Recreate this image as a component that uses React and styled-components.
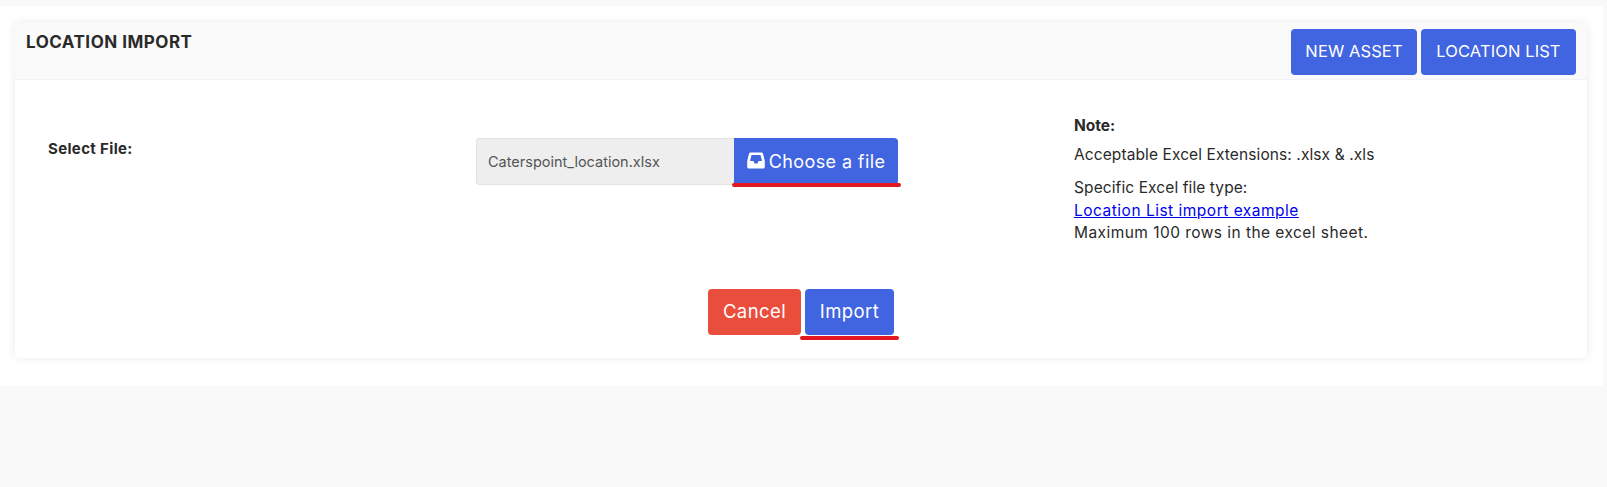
import React from "react";
import styled, { createGlobalStyle } from "styled-components";

const GlobalStyle = createGlobalStyle`
  html, body {
    margin: 0;
    padding: 0;
    background: #f9f9f9;
  }
  body {
    font-family: "Inter", "Liberation Sans", sans-serif;
    color: #2a2a2a;
  }
`;

const Page = styled.div`
  height: 487px;
  box-sizing: border-box;
  padding: 6px 4px 0 0;
  overflow: hidden;
`;

const Content = styled.main`
  background: #fff;
  height: 380px;
  box-sizing: border-box;
  padding: 17px 16px 0 15px;
`;

const Card = styled.section`
  height: 335px;
  background: #fff;
  border-radius: 4px;
  box-shadow: 0 0 10px rgba(0, 0, 0, 0.09);
`;

const CardHeader = styled.header`
  height: 57px;
  box-sizing: border-box;
  padding: 6px 11px 0 11px;
  display: flex;
  justify-content: space-between;
  align-items: flex-start;
  background: #fafafb;
  border-bottom: 1px solid #eff2f6;
  border-radius: 4px 4px 0 0;
`;

const Title = styled.h1`
  margin: 1px 0 0;
  font-size: 17px;
  line-height: 24px;
  font-weight: 700;
  letter-spacing: 0.5px;
  color: #2a2a2a;
`;

const HeaderActions = styled.div`
  display: flex;
  gap: 4px;
`;

const Button = styled.button`
  height: 46px;
  width: ${(props) => props.$width}px;
  padding: 0 0 2px;
  border: 0;
  border-radius: 4px;
  font-family: inherit;
  font-size: 16.5px;
  font-weight: 400;
  letter-spacing: 0.1px;
  color: #fff;
  background: ${(props) => (props.$danger ? "#e94e3d" : "#4165e0")};
`;

const CardBody = styled.div`
  padding: 35px 0 0 33px;
`;

const FormRow = styled.div`
  display: grid;
  grid-template-columns: 428px 598px 1fr;
  height: 171px;
`;

const FieldLabel = styled.label`
  margin-top: 23px;
  font-size: 15px;
  line-height: 21px;
  font-weight: 700;
  letter-spacing: 0.35px;
`;

const FilePicker = styled.div`
  display: flex;
  height: 47px;
  margin-top: 23px;
  position: relative;
  align-self: start;
`;

const FileName = styled.div`
  width: 258px;
  box-sizing: border-box;
  padding: 0 11px;
  display: flex;
  align-items: center;
  background: #eeeeee;
  border: 1px solid #e2e2e2;
  border-right: 0;
  border-radius: 4px 0 0 4px;
  font-size: 14.5px;
  color: #555;
`;

const ChooseButton = styled(Button)`
  height: 47px;
  padding: 0;
  display: flex;
  align-items: center;
  justify-content: center;
  gap: 4px;
  font-size: 18px;
  letter-spacing: 0.4px;
  border-radius: 0 4px 4px 0;
`;

const InboxIcon = styled.svg`
  flex: none;
  width: 18px;
  height: 17px;
  margin-top: -2px;
  fill: #fff;
`;

const Underline = styled.span`
  position: absolute;
  left: ${(props) => props.$left}px;
  top: ${(props) => props.$top}px;
  width: ${(props) => props.$width}px;
  height: 3.5px;
  border-radius: 2px;
  background: #e3171f;
`;

const NotePanel = styled.aside`
  font-size: 15.5px;
  line-height: 22.5px;
`;

const NoteTitle = styled.div`
  font-weight: 700;
  margin-bottom: 6.5px;
`;

const NoteLine = styled.div`
  letter-spacing: ${(props) => props.$spacing || 0.1}px;
  margin-bottom: ${(props) => props.$gap || 0}px;
`;

const ExampleLink = styled.a`
  display: block;
  color: #0000ee;
  text-decoration: underline;
  letter-spacing: 0.5px;
`;

const FormActions = styled.div`
  display: flex;
  gap: 4px;
  margin-top: 3px;
  padding-left: 660px;
  position: relative;
`;

const ActionButton = styled(Button)`
  font-size: 18.5px;
  letter-spacing: 0.4px;
`;

export default function App() {
  return (
    <Page>
      <GlobalStyle />
      <Content>
        <Card>
          <CardHeader>
            <Title>LOCATION IMPORT</Title>
            <HeaderActions>
              <Button $width={126}>NEW ASSET</Button>
              <Button $width={155}>LOCATION LIST</Button>
            </HeaderActions>
          </CardHeader>
          <CardBody>
            <FormRow>
              <FieldLabel>Select File:</FieldLabel>
              <FilePicker>
                <FileName>Caterspoint_location.xlsx</FileName>
                <ChooseButton $width={164}>
                  <InboxIcon viewBox="0 0 18 17">
                    <path
                      fillRule="evenodd"
                      d="M3.5.5h11q1 0 1.5 1L17.8 9v6q0 1.5-1.5 1.5H1.7Q.2 16.5.2 15V9L2 1.500q.5-1 1.5-1ZM4.500 3h9L15 9h-3.500l-1 2.500h-3L6.500 9H3Z"
                    />
                  </InboxIcon>
                  Choose a file
                </ChooseButton>
                <Underline $left={256} $top={45} $width={169} />
              </FilePicker>
              <NotePanel>
                <NoteTitle>Note:</NoteTitle>
                <NoteLine $gap={10.5}>Acceptable Excel Extensions: .xlsx &amp; .xls</NoteLine>
                <NoteLine>Specific Excel file type:</NoteLine>
                <ExampleLink href="#example">Location List import example</ExampleLink>
                <NoteLine $spacing={0.45}>Maximum 100 rows in the excel sheet.</NoteLine>
              </NotePanel>
            </FormRow>
            <FormActions>
              <ActionButton $danger $width={93}>Cancel</ActionButton>
              <ActionButton $width={89}>Import</ActionButton>
              <Underline $left={752} $top={47} $width={99} />
            </FormActions>
          </CardBody>
        </Card>
      </Content>
    </Page>
  );
}
